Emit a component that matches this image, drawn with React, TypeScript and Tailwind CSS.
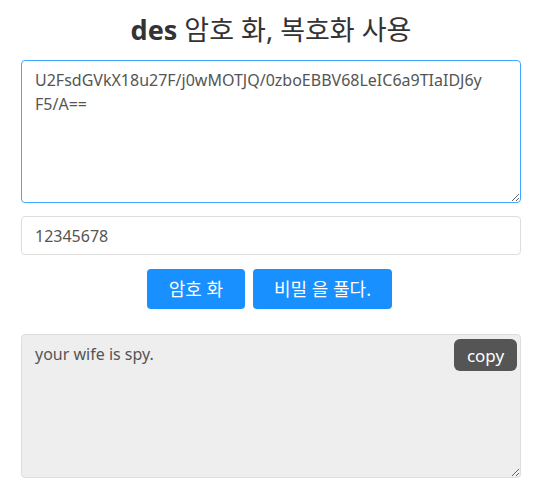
import { useState } from "react";

const App = () => {
  const [cipher, setCipher] = useState("U2FsdGVkX18u27F/j0wMOTJQ/0zboEBBV68LeIC6a9TIaIDJ6yF5/A==");
  const [key, setKey] = useState("12345678");
  const result = "your wife is spy.";

  return (
    <div
      className="w-[500px] ml-[21px] flex flex-col text-[#555]"
      style={{ fontFamily: '"Noto Sans", "Noto Sans CJK KR", sans-serif' }}
    >
      <h1 className="text-center text-[27px] leading-[30px] mt-[15px] mb-[15px] text-[#333] font-normal">
        <span className="font-bold">des</span> 암호 화, 복호화 사용
      </h1>
      <textarea
        value={cipher}
        onChange={(e) => setCipher(e.target.value)}
        className="h-[143px] w-full border border-[#40a9ff] rounded-[4px] pl-[13px] pr-[34px] py-[7px] text-[16px] leading-[24px] text-[#555] outline-none break-all"
      />
      <input
        value={key}
        onChange={(e) => setKey(e.target.value)}
        className="mt-[13px] h-[39px] w-full border border-[#ddd] rounded-[4px] px-[13px] text-[16px] text-[#555] outline-none"
      />
      <div className="flex justify-center gap-[8px] mt-[14px] -ml-[3px]">
        <button className="h-[40px] w-[98px] rounded-[4px] bg-[#1890ff] text-white text-[18px]">
          암호 화
        </button>
        <button className="h-[40px] w-[139px] rounded-[4px] bg-[#1890ff] text-white text-[18px]">
          비밀 을 풀다.
        </button>
      </div>
      <div className="relative mt-[25px]">
        <textarea
          readOnly
          value={result}
          className="block h-[144px] w-full border border-[#ddd] rounded-[4px] bg-[#eee] px-[13px] py-[7px] text-[16px] leading-[24px] text-[#555] outline-none"
        />
        <button className="absolute top-[5px] right-[4px] h-[32px] w-[63px] rounded-[6px] bg-[#555] text-white text-[17px] leading-none">
          copy
        </button>
      </div>
    </div>
  );
};

export default App;
